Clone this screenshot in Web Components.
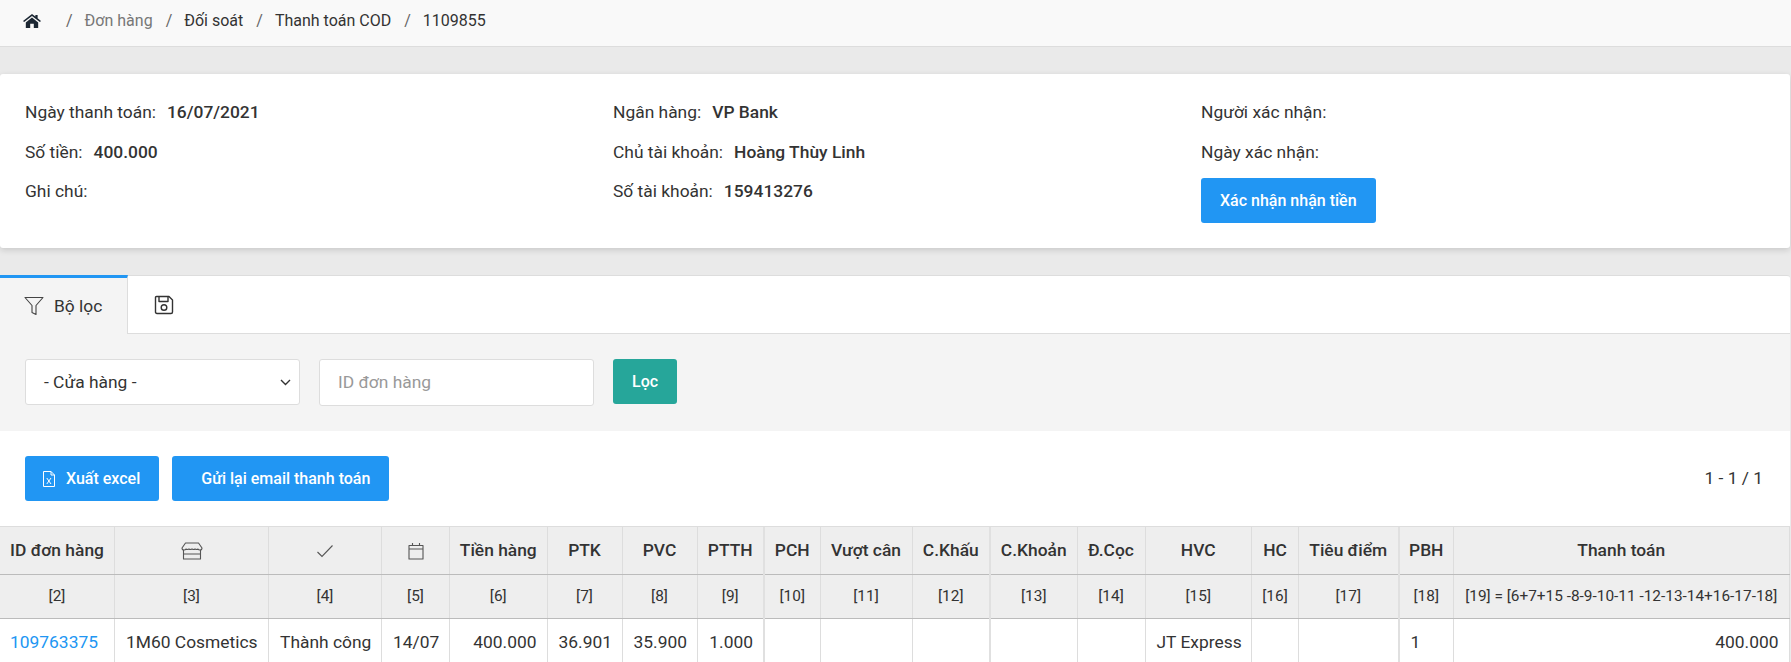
<!DOCTYPE html>
<html lang="vi">
<head>
<meta charset="utf-8">
<title>Thanh toán COD</title>
<style>
  html, body { margin: 0; height: 662px; overflow: hidden; }
  body { background: #eaeaea; color: #333; font: 17.4px/1.5 Roboto, "Liberation Sans", sans-serif; }
  page-shell { width: 1790px; }
</style>
</head>
<body>
<page-shell>
  <bread-crumbs>
    <span class="muted">Đơn hàng</span><span>Đối soát</span><span>Thanh toán COD</span><span>1109855</span>
  </bread-crumbs>
  <payment-card>
    <div>
      <info-row label="Ngày thanh toán:" value="16/07/2021"></info-row>
      <info-row label="Số tiền:" value="400.000"></info-row>
      <info-row label="Ghi chú:"></info-row>
    </div>
    <div>
      <info-row label="Ngân hàng:" value="VP Bank"></info-row>
      <info-row label="Chủ tài khoản:" value="Hoàng Thùy Linh"></info-row>
      <info-row label="Số tài khoản:" value="159413276"></info-row>
    </div>
    <div>
      <info-row label="Người xác nhận:"></info-row>
      <info-row label="Ngày xác nhận:"></info-row>
      <ui-button style="margin-top:6px">Xác nhận nhận tiền</ui-button>
    </div>
  </payment-card>
  <order-panel>
    <filter-tabs></filter-tabs>
    <filter-bar></filter-bar>
    <order-toolbar></order-toolbar>
    <order-table></order-table>
  </order-panel>
</page-shell>

<script>
const icons = {
  home: '<svg width="18" height="14" viewBox="0 0 16 14" preserveAspectRatio="none"><path fill="currentColor" d="M8 0 L11 2.6 V1 H13 V4.3 L16 7 L15 8 L8 2 L1 8 L0 7 Z M2.5 8.4 L8 3.6 L13.5 8.4 V14 H9.6 V9.8 H6.4 V14 H2.5 Z"/></svg>',
  filter: '<svg width="20" height="20" viewBox="0 0 20 20" fill="none" stroke="#444" stroke-width="1.1" stroke-linejoin="round"><path d="M1 1.5 H19 L12 9.5 V18.5 L8 16.5 V9.5 Z"/></svg>',
  save: '<svg width="20" height="20" viewBox="0 0 20 20" fill="none" stroke="#333" stroke-width="1.4" stroke-linejoin="round"><path d="M2.5 1.5 H15 L18.5 5 V17 Q18.5 18.5 17 18.5 H3 Q1.5 18.5 1.5 17 V2.5 Q1.5 1.5 2.5 1.5 Z"/><path d="M5 1.5 V6.5 H14 V1.5"/><circle cx="10" cy="12.5" r="2.8"/></svg>',
  excel: '<svg width="12" height="16" viewBox="0 0 12 16" fill="none" stroke="#fff" stroke-width="1"><path d="M.5.5 H8 L11.5 4 V15.5 H.5 Z"/><path d="M8 .5 V4 H11.5"/><path d="M3.8 7 L8 13 M8 7 L3.8 13"/></svg>',
  shop: '<svg width="22" height="18" viewBox="0 0 22 18" fill="none" stroke="#555" stroke-width="1.1" stroke-linejoin="round"><path d="M4.5 1 H17.5 L21 6 Q21 8 19 8 Q17.5 8 17 7 Q16 8 14 7 Q13 8 11 7 Q9 8 8 7 Q6 8 5 7 Q4.5 8 3 8 Q1 8 1 6 Z"/><path d="M2.5 8 V17 H19.5 V8 M2.5 12 H19.5"/></svg>',
  check: '<svg width="18" height="14" viewBox="0 0 18 14" fill="none" stroke="#555" stroke-width="1.1"><path d="M1.5 8 L6 12.5 L16.5 1.5"/></svg>',
  cal: '<svg width="16" height="18" viewBox="0 0 16 18" fill="none" stroke="#555" stroke-width="1.1" stroke-linejoin="round"><path d="M1 3.5 H15 V17 H1 Z M1 7 H15 M4.5 1 V3.5 M11.5 1 V3.5"/></svg>'
};

class PageShell extends HTMLElement {
  constructor() {
    super();
    this.attachShadow({ mode: 'open' }).innerHTML = `
      <style>:host { display: flex; flex-direction: column; }</style>
      <slot></slot>`;
  }
}

class BreadCrumbs extends HTMLElement {
  constructor() {
    super();
    const root = this.attachShadow({ mode: 'open' });
    root.innerHTML = `
      <style>
      :host { display: flex; align-items: center; height: 47px; box-sizing: border-box; padding: 0 0 4px 23px;
        background: #f9f9f9; border-bottom: 1px solid #ddd; font-size: 16px; color: #333; width: 1791px; }
      .home { display: flex; color: #1c2733; margin-right: 25px; }
      .sep { color: #666; margin-right: 12px; }
      .item { margin-right: 13px; }
      .muted { color: #777; }
      </style>
      <span class="home">${icons.home}</span>`;
    for (const el of [...this.children]) {
      const sep = document.createElement('span');
      sep.className = 'sep';
      sep.textContent = '/';
      const item = document.createElement('span');
      item.className = 'item ' + el.className;
      item.textContent = el.textContent;
      root.append(sep, item);
    }
  }
}

class PaymentCard extends HTMLElement {
  constructor() {
    super();
    this.attachShadow({ mode: 'open' }).innerHTML = `
      <style>
      :host { display: grid; grid-template-columns: repeat(3, 588px); height: 174px; box-sizing: border-box;
        margin-top: 27px; padding: 19px 0 0 25px; background: #fff; border-radius: 3px;
        box-shadow: 0 2px 6px rgba(0,0,0,.15); }
      </style>
      <slot></slot>`;
  }
}

class InfoRow extends HTMLElement {
  constructor() {
    super();
    const value = this.getAttribute('value');
    this.attachShadow({ mode: 'open' }).innerHTML = `
      <style>
      :host { display: flex; gap: 11px; height: 39.5px; line-height: 39.5px; white-space: nowrap; }
      b { font-weight: 500; }
      </style>
      <span>${this.getAttribute('label')}</span>${value ? `<b>${value}</b>` : ''}`;
  }
}

class UiButton extends HTMLElement {
  constructor() {
    super();
    this.attachShadow({ mode: 'open' }).innerHTML = `
      <style>
      :host { display: inline-flex; align-items: center; height: 45px; box-sizing: border-box; padding: 0 19px;
        background: var(--btn-bg, #2196f3); color: #fff; border-radius: 3px; font-weight: 500; font-size: 16px;
        white-space: nowrap; }
      </style>
      <slot></slot>`;
  }
}

class OrderPanel extends HTMLElement {
  constructor() {
    super();
    this.attachShadow({ mode: 'open' }).innerHTML = `
      <style>
      :host { display: block; margin-top: 27px; background: #fff; border-top: 1px solid #ddd;
        border-radius: 3px 3px 0 0; }
      </style>
      <slot></slot>`;
  }
}

class FilterTabs extends HTMLElement {
  constructor() {
    super();
    this.attachShadow({ mode: 'open' }).innerHTML = `
      <style>
      :host { display: flex; height: 58px; box-sizing: border-box; border-bottom: 1px solid #ddd; }
      .tab { display: flex; align-items: center; gap: 10px; box-sizing: border-box; height: 58px; }
      .active { width: 128px; padding-left: 24px; background: #f4f4f4; border-top: 3px solid #2196f3;
        border-right: 1px solid #ddd; margin-top: -1px; height: 59px; }
      .save { padding-left: 26px; }
      svg { display: block; }
      </style>
      <div class="tab active">${icons.filter}<span>Bộ lọc</span></div>
      <div class="tab save">${icons.save}</div>`;
  }
}

class FilterBar extends HTMLElement {
  constructor() {
    super();
    this.attachShadow({ mode: 'open' }).innerHTML = `
      <style>
      :host { display: flex; align-items: flex-start; gap: 19px; height: 97px; box-sizing: border-box;
        padding: 25px; background: #f4f4f4; }
      .field { width: 275px; box-sizing: border-box; border: 1px solid #ddd; border-radius: 3px;
        background: #fff; display: flex; align-items: center; }
      .select { height: 46px; justify-content: space-between; padding: 0 8px 0 18px; }
      .input { height: 47px; padding: 0 18px; color: #999; }
      </style>
      <div class="field select"><span>- Cửa hàng -</span>
        <svg width="11" height="7" viewBox="0 0 11 7" fill="none" stroke="#333" stroke-width="1.4"><path d="M1 1 L5.5 5.5 L10 1"/></svg>
      </div>
      <div class="field input">ID đơn hàng</div>
      <ui-button style="--btn-bg:#26a69a">Lọc</ui-button>`;
  }
}

class OrderToolbar extends HTMLElement {
  constructor() {
    super();
    this.attachShadow({ mode: 'open' }).innerHTML = `
      <style>
      :host { display: flex; align-items: flex-start; gap: 13px; height: 95px; box-sizing: border-box;
        padding: 25px 27px 0 25px; }
      .pager { margin-left: auto; line-height: 45px; }
      svg { margin-right: 11px; }
      .excel { padding-left: 18px; padding-right: 19px; }
      .mail { padding-left: 29px; padding-right: 19px; }
      </style>
      <ui-button class="excel">${icons.excel}Xuất excel</ui-button>
      <ui-button class="mail">Gửi lại email thanh toán</ui-button>
      <span class="pager">1 - 1 / 1</span>`;
  }
}

const columns = [
  ['ID đơn hàng', 114.5, '<a>109763375</a>'], [icons.shop, 154, '1M60 Cosmetics'], [icons.check, 113, 'Thành công'],
  [icons.cal, 68, '14/07'], ['Tiền hàng', 97.5, '400.000', 'r'], ['PTK', 75, '36.901', 'r'], ['PVC', 75, '35.900', 'r'],
  ['PTTH', 67, '1.000', 'r thick'], ['PCH', 56, ''], ['Vượt cân', 92, ''], ['C.Khấu', 78, '', 'thick'], ['C.Khoản', 87, ''],
  ['Đ.Cọc', 68, ''], ['HVC', 106.5, 'JT Express'], ['HC', 47, ''], ['Tiêu điểm', 100, '', 'thick'], ['PBH', 55, '1'],
  ['Thanh toán', 335.5, '400.000', 'r']
];

class OrderTable extends HTMLElement {
  constructor() {
    super();
    const notes = columns.map((c, i) => i === 17 ? '[19] = [6+7+15 -8-9-10-11 -12-13-14+16-17-18]' : `[${i + 2}]`);
    this.attachShadow({ mode: 'open' }).innerHTML = `
      <style>
      :host { display: block; border-top: 1px solid #ddd; }
      table { border-collapse: collapse; table-layout: fixed; width: 1789px; }
      th, td { border-right: 1px solid #ddd; padding: 0; text-align: center; white-space: nowrap; }
      th { background: #eee; font-weight: 500; font-size: 17.4px; }
      .thick { border-right: 2px solid #e0e0e0; }
      thead tr:first-child th { height: 47px; border-bottom: 1px solid #bbb; }
      thead tr:last-child th { height: 43px; border-bottom: 1px solid #bbb; font-weight: 400; font-size: 15.4px; }
      td { height: 47px; text-align: left; padding: 0 10px 0 11px; }
      td:first-child { padding-left: 10px; }
      td.r { text-align: right; }
      a { color: #2196f3; }
      th svg { display: block; margin: auto; }
      </style>
      <table>
        <colgroup>${columns.map(c => `<col style="width:${c[1]}px">`).join('')}</colgroup>
        <thead>
          <tr>${columns.map(c => `<th class="${c[3] || ''}">${c[0]}</th>`).join('')}</tr>
          <tr>${notes.map((n, i) => `<th class="${columns[i][3] || ''}">${n}</th>`).join('')}</tr>
        </thead>
        <tbody>
          <tr>${columns.map(c => `<td class="${c[3] || ''}">${c[2]}</td>`).join('')}</tr>
        </tbody>
      </table>`;
  }
}

customElements.define('page-shell', PageShell);
customElements.define('bread-crumbs', BreadCrumbs);
customElements.define('payment-card', PaymentCard);
customElements.define('info-row', InfoRow);
customElements.define('ui-button', UiButton);
customElements.define('order-panel', OrderPanel);
customElements.define('filter-tabs', FilterTabs);
customElements.define('filter-bar', FilterBar);
customElements.define('order-toolbar', OrderToolbar);
customElements.define('order-table', OrderTable);
</script>
</body>
</html>
